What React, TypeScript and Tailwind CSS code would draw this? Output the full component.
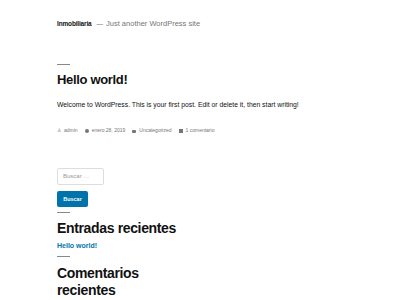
const font = { fontFamily: '"Liberation Sans", Arial, sans-serif' }

function Rule() {
  return <div className="h-px w-[13px] bg-[#888]" />
}

function Meta({ icon, children }: { icon: React.ReactNode; children: React.ReactNode }) {
  return (
    <span className="flex items-center gap-[3px]">
      {icon}
      {children}
    </span>
  )
}

export default function App() {
  return (
    <div className="h-[300px] w-[400px] overflow-hidden bg-white pl-[57px] text-[#111]" style={font}>
      <header className="flex items-center pt-[18px] text-[6.5px]">
        <span className="font-semibold tracking-tight text-[#111]">Inmobiliaria</span>
        <span className="ml-[5px] text-[#767676]">—</span>
        <span className="ml-[3px] text-[7.5px] text-[#767676]">Just another WordPress site</span>
      </header>

      <article className="mt-[35px]">
        <Rule />
        <h1 className="mt-[7px] text-[13px] font-bold leading-[16px] tracking-tight">Hello world!</h1>
        <p className="mt-[12px] text-[6.8px] leading-[10px] text-[#111]">
          Welcome to WordPress. This is your first post. Edit or delete it, then start writing!
        </p>
        <div className="mt-[17px] flex items-center gap-[7px] text-[5px] text-[#767676]">
          <Meta icon={<span className="text-[5px]">♙</span>}>admin</Meta>
          <Meta icon={<span className="h-[4px] w-[4px] rounded-full bg-[#767676]" />}>enero 28, 2019</Meta>
          <Meta icon={<span className="h-[3px] w-[4px] rounded-[1px] bg-[#767676]" />}>Uncategorized</Meta>
          <Meta icon={<span className="h-[4px] w-[4px] bg-[#767676]" />}>1 comentario</Meta>
        </div>
      </article>

      <aside className="mt-[33px]">
        <div className="flex h-[17px] w-[47px] items-center rounded-[2px] border border-[#ddd] pl-[5px] text-[6px] text-[#999]">
          Buscar …
        </div>
        <div className="mt-[6px] flex h-[16px] w-[31px] items-center justify-center rounded-[2px] bg-[#0073aa] text-[5.5px] font-bold text-white">
          Buscar
        </div>

        <div className="mt-[5px]">
          <Rule />
          <h2 className="mt-[7px] text-[14px] font-semibold leading-[17px] tracking-tight">Entradas recientes</h2>
          <div className="mt-[4px] text-[7px] font-bold text-[#0073aa]">Hello world!</div>
        </div>

        <div className="mt-[5px] w-[140px]">
          <Rule />
          <h2 className="mt-[8px] text-[14px] font-semibold leading-[17px] tracking-tight">Comentarios recientes</h2>
        </div>
      </aside>
    </div>
  )
}
